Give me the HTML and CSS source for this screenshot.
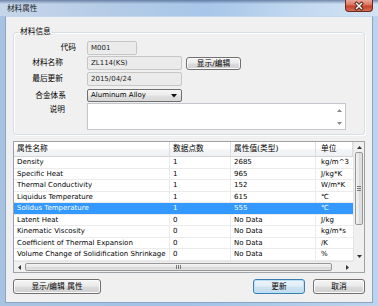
FILE: index.html
```html
<!DOCTYPE html>
<html lang="zh-CN">
<head>
<meta charset="utf-8">
<title>材料属性</title>
<link rel="stylesheet" href="styles.css">
</head>
<body>
<div class="window">
  <div class="titlebar">
    <span class="title">材料属性</span>
    <span class="close">
      <svg width="26" height="10" viewBox="0 0 26 10">
        <path d="M10.5 2.5 L15.5 7.5 M15.5 2.5 L10.5 7.5" stroke="#4a1f18" stroke-width="3.2" stroke-linecap="square"/>
        <path d="M10.5 2.5 L15.5 7.5 M15.5 2.5 L10.5 7.5" stroke="#ffffff" stroke-width="1.5" stroke-linecap="square"/>
      </svg>
    </span>
  </div>
  <div class="client">
    <fieldset class="group">
      <legend>材料信息</legend>
      <div class="form">
        <span class="lbl lbl-code">代码</span>
        <span class="field field-short">M001</span>

        <span class="lbl lbl-name">材料名称</span>
        <span class="field">ZL114(KS)</span>
        <span></span>
        <button class="btn btn-small">显示/编辑</button>

        <span class="lbl lbl-name">最后更新</span>
        <span class="field">2015/04/24</span>

        <span class="lbl lbl-combo">合金体系</span>
        <span class="combo">Aluminum Alloy
          <svg class="combo-arrow" width="6" height="4" viewBox="0 0 6 4"><path d="M0 0 H6 L3 3.5 Z" fill="#111"/></svg>
        </span>

        <span class="lbl lbl-memo">说明</span>
        <span class="memo">
          <span class="memo-scroll">
            <svg width="5" height="3" viewBox="0 0 5 3"><path d="M0 3 H5 L2.5 0 Z" fill="#8a8a8a"/></svg>
            <svg width="5" height="3" viewBox="0 0 5 3"><path d="M0 0 H5 L2.5 3 Z" fill="#8a8a8a"/></svg>
          </span>
        </span>
      </div>
    </fieldset>

    <div class="list">
      <div class="view">
        <div class="row head">
          <span class="cell">属性名称</span>
          <span class="cell">数据点数</span>
          <span class="cell">属性值(类型)</span>
          <span class="cell cell-unit">单位</span>
        </div>
        <div class="row"><span class="cell">Density</span><span class="cell">1</span><span class="cell">2685</span><span class="cell cell-unit">kg/m^3</span></div>
        <div class="row"><span class="cell">Specific Heat</span><span class="cell">1</span><span class="cell">965</span><span class="cell cell-unit">J/kg*K</span></div>
        <div class="row"><span class="cell">Thermal Conductivity</span><span class="cell">1</span><span class="cell">152</span><span class="cell cell-unit">W/m*K</span></div>
        <div class="row"><span class="cell">Liquidus Temperature</span><span class="cell">1</span><span class="cell">615</span><span class="cell cell-unit">℃</span></div>
        <div class="row selected"><span class="cell">Solidus Temperature</span><span class="cell">1</span><span class="cell">555</span><span class="cell cell-unit">℃</span></div>
        <div class="row"><span class="cell">Latent Heat</span><span class="cell">0</span><span class="cell">No Data</span><span class="cell cell-unit">J/kg</span></div>
        <div class="row"><span class="cell">Kinematic Viscosity</span><span class="cell">0</span><span class="cell">No Data</span><span class="cell cell-unit">kg/m*s</span></div>
        <div class="row"><span class="cell">Coefficient of Thermal Expansion</span><span class="cell">0</span><span class="cell">No Data</span><span class="cell cell-unit">/K</span></div>
        <div class="row"><span class="cell">Volume Change of Solidification Shrinkage</span><span class="cell">0</span><span class="cell">No Data</span><span class="cell cell-unit">%</span></div>
      </div>
      <div class="vscroll">
        <span class="arrow"><svg width="5" height="3" viewBox="0 0 5 3"><path d="M0 3 H5 L2.5 0 Z" fill="#333"/></svg></span>
        <span class="track">
          <span class="thumb thumb-v"><span class="grip-v"></span></span>
        </span>
        <span class="arrow"><svg width="5" height="3" viewBox="0 0 5 3"><path d="M0 0 H5 L2.5 3 Z" fill="#333"/></svg></span>
      </div>
      <div class="hscroll">
        <span class="arrow"><svg width="3" height="5" viewBox="0 0 3 5"><path d="M3 0 V5 L0 2.5 Z" fill="#333"/></svg></span>
        <span class="track track-h">
          <span class="thumb thumb-h"><span class="grip-h"></span></span>
        </span>
        <span class="arrow"><svg width="3" height="5" viewBox="0 0 3 5"><path d="M0 0 V5 L3 2.5 Z" fill="#333"/></svg></span>
      </div>
      <div class="corner"></div>
    </div>

    <div class="buttons">
      <button class="btn btn-wide">显示/编辑 属性</button>
      <span class="spacer"></span>
      <button class="btn btn-default">更新</button>
      <button class="btn">取消</button>
    </div>
  </div>
</div>
</body>
</html>
```
FILE: styles.css
```css
* { box-sizing: border-box; }
html, body { margin: 0; padding: 0; }
body {
  width: 378px;
  height: 306px;
  overflow: hidden;
  font-family: "DejaVu Sans", "Noto Sans CJK SC", sans-serif;
  font-size: 7.7px;
  color: #000;
  background: #a9c5e6;
}
.window {
  width: 378px;
  height: 306px;
  display: flex;
  flex-direction: column;
  padding: 0 5px 3px 5px;
  background: linear-gradient(to right, #a8c2e2 0%, #a3c2e6 50%, #bcd4ee 100%);
}
.titlebar {
  margin: 0 -5px;
  height: 16px;
  flex: none;
  display: flex;
  align-items: flex-start;
  justify-content: space-between;
  padding-left: 7px;
  background:
    linear-gradient(to bottom, rgba(40, 65, 110, 0.55) 0, rgba(40, 65, 110, 0) 4px),
    linear-gradient(to right, #c6d6ea 0%, #b4cbe6 30%, #a7c6e9 55%, #c3d9f0 80%, #d3e3f4 100%);
}
.title {
  font-size: 7.6px;
  line-height: 17px;
  color: #1c1c1c;
}
.close {
  width: 28px;
  height: 12px;
  margin-right: 5px;
  border: 1px solid #6b2a1f;
  border-top: none;
  border-radius: 0 0 4px 4px;
  background: linear-gradient(to bottom, #e9a897 0%, #d9735c 45%, #c5432b 55%, #d46e55 100%);
  display: flex;
  align-items: center;
  justify-content: center;
}
.client {
  flex: 1;
  background: #f0f0f0;
  border: 1px solid #8ba4c2;
  border-top-color: #c4d6ea;
  padding: 10px 7px 0 7px;
  display: flex;
  flex-direction: column;
}
.group {
  margin: 0;
  padding: 4px 0 5px 0;
  min-width: 0;
  border: 1px solid #d5dfe5;
  border-radius: 3px;
  box-shadow: inset 1px 1px 0 #fff, 1px 1px 0 #fff;
}
.group legend {
  margin-left: 5px;
  padding: 0 1px;
  line-height: 10px;
  font-size: 7.7px;
}
.form {
  display: grid;
  grid-template-columns: 73px 95px 4px 55px;
  grid-template-rows: 15px 16px 17px 14px 26px;
  align-items: start;
}
.lbl {
  grid-column: 1;
  text-align: right;
  line-height: 14px;
  height: 14px;
}
.lbl-code { padding-right: 11px; }
.lbl-name { padding-right: 24px; }
.lbl-combo { padding-right: 21px; line-height: 13px; }
.lbl-memo { padding-right: 22px; }
.field {
  grid-column: 2;
  height: 14px;
  border: 1px solid #c6c6c6;
  border-radius: 2px;
  background: #ebebeb;
  padding-left: 3px;
  line-height: 12px;
  font-size: 7px;
  color: #1a1a1a;
}
.field-short { width: 50px; }
.btn {
  font-family: inherit;
  font-size: 7.7px;
  color: #000;
  padding: 0;
  height: 15px;
  width: 52px;
  border: 1px solid #707070;
  border-radius: 3px;
  background: linear-gradient(to bottom, #f4f4f4 0%, #ebebeb 48%, #dcdcdc 52%, #cfcfcf 100%);
  box-shadow: inset 0 0 0 1px #fafafa;
  line-height: 13px;
}
.btn-small {
  grid-column: 4;
  height: 13px;
  width: 55px;
  margin-top: 1px;
  line-height: 11px;
}
.btn-wide { width: 88px; }
.btn-default {
  border-color: #3c7fb1;
  background: linear-gradient(to bottom, #eef5fb 0%, #e1edf7 48%, #cfe3f2 52%, #c2dbee 100%);
  box-shadow: inset 0 0 0 1px #b7e1f7;
}
.combo {
  grid-column: 2;
  height: 13px;
  border: 1px solid #707070;
  border-radius: 2px;
  background: linear-gradient(to bottom, #f6f6f6 0%, #ececec 48%, #e0e0e0 52%, #d8d8d8 100%);
  padding-left: 3px;
  padding-right: 4px;
  line-height: 11px;
  font-size: 7px;
  display: flex;
  align-items: center;
  justify-content: space-between;
}
.combo-arrow { flex: none; }
.memo {
  grid-column: 2 / 5;
  width: 259px;
  height: 27px;
  border: 1px solid #c3c6cc;
  background: #fff;
  display: flex;
  justify-content: flex-end;
}
.memo-scroll {
  width: 11px;
  display: flex;
  flex-direction: column;
  justify-content: space-between;
  align-items: center;
  padding: 5px 0 4px 0;
}
.memo-scroll svg { display: block; }
.list {
  margin-top: 6px;
  height: 132px;
  border: 1px solid #9ea3a8;
  background: #fff;
  display: grid;
  grid-template-columns: 339px 11px;
  grid-template-rows: 119px 11px;
}
.view { overflow: hidden; }
.row {
  display: grid;
  grid-template-columns: 156px 61px 85px 37px;
  height: 11.5px;
  border-bottom: 1px solid #ebebeb;
}
.row .cell {
  padding-left: 3px;
  line-height: 10.5px;
  font-size: 7px;
  white-space: nowrap;
  overflow: hidden;
  border-right: 1px solid #ebebeb;
}
.row .cell-unit { padding-left: 5px; border-right: none; }
.row.head {
  height: 15px;
  background: linear-gradient(to bottom, #ffffff 0%, #ffffff 50%, #f5f6f7 50%, #eff0f2 100%);
  border-bottom: 1px solid #d5d5d5;
}
.row.head .cell {
  line-height: 14px;
  font-size: 7.7px;
  border-right: 1px solid #dcdde0;
}
.row.selected {
  background: #3399ff;
  color: #fff;
}
.row.selected .cell { border-right-color: #3399ff; }
.vscroll {
  display: flex;
  flex-direction: column;
  background: #f0f0f0;
  border-left: 1px solid #e4e4e4;
}
.arrow {
  flex: none;
  width: 10px;
  height: 10px;
  display: flex;
  align-items: center;
  justify-content: center;
}
.vscroll .arrow { width: 100%; }
.arrow svg { display: block; }
.track {
  flex: 1;
  display: flex;
  flex-direction: column;
}
.thumb {
  border: 1px solid #979797;
  border-radius: 2px;
  display: flex;
  align-items: center;
  justify-content: center;
}
.thumb-v {
  height: 73px;
  margin: 0 1px;
  background: linear-gradient(to right, #f2f2f2 0%, #e8e8e8 50%, #d8d8d8 51%, #e3e3e3 100%);
}
.grip-v {
  width: 4px;
  height: 5px;
  background: repeating-linear-gradient(to bottom, #777 0, #777 1px, transparent 1px, transparent 2px);
}
.hscroll {
  display: flex;
  background: #f0f0f0;
  border-top: 1px solid #e4e4e4;
}
.hscroll .arrow { height: 100%; width: 11px; }
.track-h {
  flex-direction: row;
  padding-right: 10px;
}
.thumb-h {
  width: 307px;
  margin: 1px 0;
  background: linear-gradient(to bottom, #f2f2f2 0%, #e8e8e8 50%, #d8d8d8 51%, #e3e3e3 100%);
}
.grip-h {
  width: 5px;
  height: 4px;
  background: repeating-linear-gradient(to right, #777 0, #777 1px, transparent 1px, transparent 2px);
}
.corner { background: #f0f0f0; }
.buttons {
  margin-top: 6px;
  display: flex;
  gap: 8px;
}
.spacer { flex: 1; }
```
